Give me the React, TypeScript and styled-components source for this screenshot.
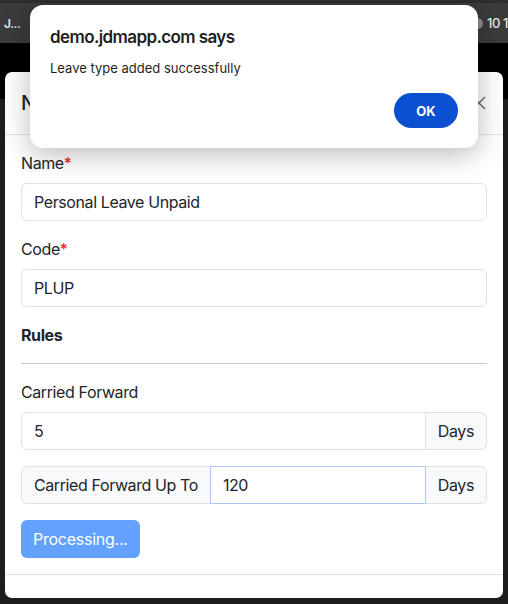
import { FC } from "react";
import styled, { createGlobalStyle } from "styled-components";

const GlobalStyle = createGlobalStyle`
  * { box-sizing: border-box; }
  html, body { margin: 0; padding: 0; background: #1c1c1c; }
  body {
    font-family: Inter, "Noto Sans", "Liberation Sans", sans-serif;
    letter-spacing: -0.4px;
    color: #212529;
  }
  input, button { letter-spacing: inherit; }
`;

const Page = styled.div`
  position: relative;
  width: 508px;
  height: 604px;
  overflow: hidden;
  background: #1c1c1c;
`;

const BrowserBar = styled.div`
  height: 43px;
  background: #3b3b3b;
  border-top: 3px solid #2e2e2e;
  display: flex;
  align-items: center;
  justify-content: space-between;
  padding: 0 0 0 4px;
  color: #e6e6e6;
  font-size: 12px;
  font-weight: 600;
`;

const BarRight = styled.div`
  display: flex;
  align-items: center;
  gap: 4px;
  font-size: 13px;
  font-weight: 500;
  white-space: nowrap;
`;

const BarDot = styled.span`
  width: 11px;
  height: 11px;
  border-radius: 50%;
  background: #8a8a8a;
`;

const BlackBand = styled.div`
  height: 56px;
  background: #000;
`;

const Backdrop = styled.div`
  height: 505px;
  background: #1d1d1d;
`;

const Modal = styled.div`
  position: absolute;
  left: 5px;
  top: 72px;
  width: 498px;
  height: 526px;
  background: #fff;
  border-radius: 7px;
  overflow: hidden;
  display: flex;
  flex-direction: column;
`;

const ModalHeader = styled.div`
  display: flex;
  align-items: center;
  justify-content: space-between;
  padding: 16px;
  border-bottom: 1px solid #dee2e6;
`;

const ModalTitle = styled.h5`
  margin: 0;
  font-size: 20px;
  line-height: 30px;
  font-weight: 500;
`;

const CloseButton = styled.button`
  width: 24px;
  height: 24px;
  padding: 0;
  border: 0;
  background: transparent;
  display: flex;
  align-items: center;
  justify-content: center;
  margin-right: -4px;
`;

const ModalBody = styled.div`
  padding: 16px;
`;

const Field = styled.div`
  margin-bottom: 16px;
`;

const Label = styled.label`
  display: block;
  font-size: 16px;
  line-height: 24px;
  margin-bottom: 8px;
`;

const Required = styled.span`
  color: #ee1111;
`;

const Input = styled.input<{ $focused?: boolean; $grouped?: boolean }>`
  display: block;
  width: 100%;
  height: 38px;
  padding: 6px 12px;
  font-family: inherit;
  font-size: 16px;
  color: #212529;
  background: #fff;
  border: 1px solid ${({ $focused }) => ($focused ? "#a9c8f8" : "#dee2e6")};
  border-radius: ${({ $grouped }) => ($grouped ? "0" : "6px")};
  outline: none;
  flex: ${({ $grouped }) => ($grouped ? "1 1 auto" : "none")};
  min-width: 0;
  position: relative;
  z-index: ${({ $focused }) => ($focused ? 1 : 0)};

  &:first-child {
    border-top-left-radius: 6px;
    border-bottom-left-radius: 6px;
  }
`;

const InputGroup = styled.div`
  display: flex;
  width: 100%;
  margin-bottom: 16px;
`;

const Addon = styled.span<{ $side: "left" | "right" }>`
  display: flex;
  align-items: center;
  height: 38px;
  padding: 6px 12px;
  font-size: 16px;
  white-space: nowrap;
  background: #f8f9fa;
  border: 1px solid #dee2e6;
  border-radius: ${({ $side }) => ($side === "left" ? "6px 0 0 6px" : "0 6px 6px 0")};
  margin-${({ $side }) => ($side === "left" ? "right" : "left")}: -1px;
`;

const SectionTitle = styled.h6`
  margin: 0;
  font-size: 16px;
  line-height: 24px;
  font-weight: 700;
`;

const Rule = styled.hr`
  margin: 16px 0;
  border: 0;
  border-top: 1px solid #c8c8c8;
`;

const SubmitButton = styled.button`
  height: 38px;
  padding: 6px 12px;
  font-family: inherit;
  font-size: 16px;
  letter-spacing: -0.25px;
  color: #fff;
  background: #62a1fe;
  border: 0;
  border-radius: 6px;
`;

const ModalFooter = styled.div`
  flex: 1;
  border-top: 1px solid #dee2e6;
`;

const Alert = styled.div`
  position: absolute;
  left: 30px;
  top: 5px;
  width: 448px;
  height: 143px;
  background: #fff;
  border-radius: 13px;
  box-shadow: 0 6px 28px rgba(0, 0, 0, 0.28);
  padding: 21px 20px 20px;
  z-index: 5;
`;

const AlertTitle = styled.div`
  font-size: 17px;
  line-height: 22px;
  font-weight: 600;
  letter-spacing: -0.6px;
  color: #1f1f1f;
`;

const AlertMessage = styled.div`
  margin-top: 11px;
  font-size: 13px;
  line-height: 18px;
  letter-spacing: 0;
  color: #1f1f1f;
`;

const AlertActions = styled.div`
  display: flex;
  justify-content: flex-end;
  margin-top: 16px;
`;

const OkButton = styled.button`
  width: 64px;
  height: 35px;
  border: 0;
  border-radius: 18px;
  background: #0b50d0;
  color: #fff;
  font-family: inherit;
  font-size: 13px;
  font-weight: 700;
  letter-spacing: 0;
`;

const CloseIcon: FC = () => (
  <svg width="14" height="14" viewBox="0 0 14 14">
    <path d="M1 1L13 13M13 1L1 13" stroke="#6f6f6f" strokeWidth="1.5" fill="none" />
  </svg>
);

export default function App() {
  return (
    <Page>
      <GlobalStyle />
      <BrowserBar>
        <span>J...</span>
        <BarRight>
          <BarDot />
          <span>10 1</span>
        </BarRight>
      </BrowserBar>
      <BlackBand />
      <Backdrop />

      <Modal>
        <ModalHeader>
          <ModalTitle>New Leave Type</ModalTitle>
          <CloseButton type="button" aria-label="Close">
            <CloseIcon />
          </CloseButton>
        </ModalHeader>
        <ModalBody>
          <Field>
            <Label>
              Name<Required>*</Required>
            </Label>
            <Input defaultValue="Personal Leave Unpaid" />
          </Field>
          <Field>
            <Label>
              Code<Required>*</Required>
            </Label>
            <Input defaultValue="PLUP" />
          </Field>
          <SectionTitle>Rules</SectionTitle>
          <Rule />
          <Label>Carried Forward</Label>
          <InputGroup>
            <Input $grouped defaultValue="5" />
            <Addon $side="right">Days</Addon>
          </InputGroup>
          <InputGroup>
            <Addon $side="left">Carried Forward Up To</Addon>
            <Input $grouped $focused defaultValue="120" />
            <Addon $side="right">Days</Addon>
          </InputGroup>
          <SubmitButton type="submit" disabled>
            Processing...
          </SubmitButton>
        </ModalBody>
        <ModalFooter />
      </Modal>

      <Alert role="alertdialog">
        <AlertTitle>demo.jdmapp.com says</AlertTitle>
        <AlertMessage>Leave type added successfully</AlertMessage>
        <AlertActions>
          <OkButton type="button">OK</OkButton>
        </AlertActions>
      </Alert>
    </Page>
  );
}
